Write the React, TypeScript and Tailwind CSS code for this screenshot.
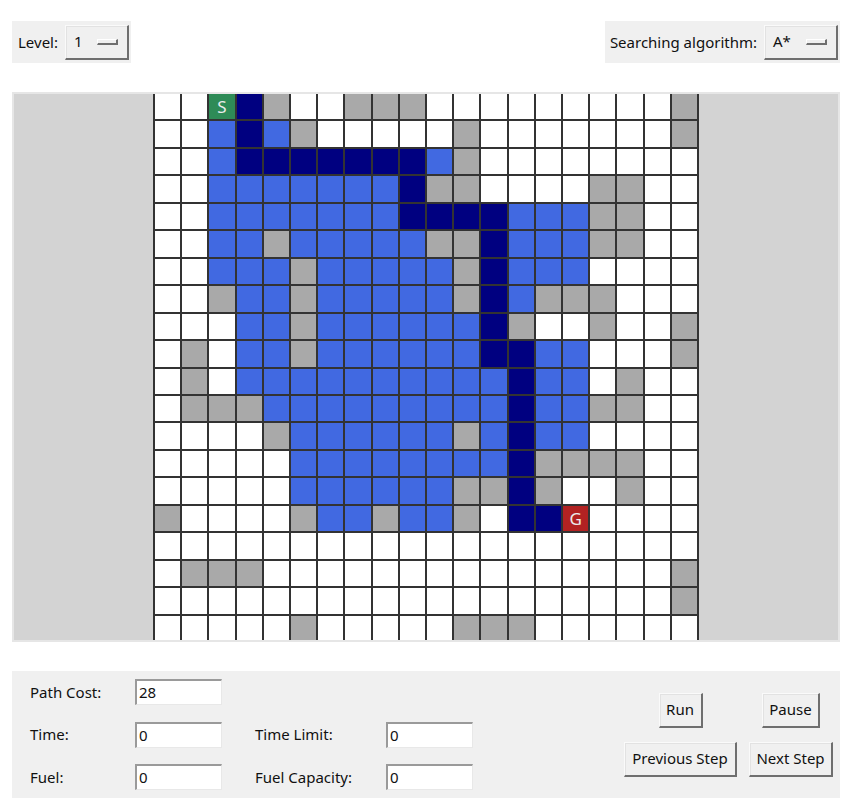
import React from "react";

// W = free, X = wall, B = visited, P = path, S = start, G = goal
const MAP = [
  "WWSPXWWXXXWWWWWWWWWX",
  "WWBPBXWWWWWXWWWWWWWX",
  "WWBPPPPPPPBXWWWWWWWW",
  "WWBBBBBBBPXXWWWWXXWW",
  "WWBBBBBBBPPPPBBBXXWW",
  "WWBBXBBBBBXXPBBBXXWW",
  "WWBBBXBBBBBXPBBBWWWW",
  "WWXBBXBBBBBXPBXXXWWW",
  "WWWBBXBBBBBBPXWWXWWX",
  "WXWBBXBBBBBBPPBBWWWX",
  "WXWBBBBBBBBBBPBBWXWW",
  "WXXXBBBBBBBBBPBBXXWW",
  "WWWWXBBBBBBXBPBBWWWW",
  "WWWWWBBBBBBBBPXXXXWW",
  "WWWWWBBBBBBXXPXWWXWW",
  "XWWWWXBBXBBXWPPGWWWW",
  "WWWWWWWWWWWWWWWWWWWW",
  "WXXXWWWWWWWWWWWWWWWX",
  "WWWWWWWWWWWWWWWWWWWX",
  "WWWWWXWWWWWXXXWWWWWW",
];

const cellClass: Record<string, string> = {
  W: "bg-white",
  X: "bg-[#a9a9a9]",
  B: "bg-[#4169e1]",
  P: "bg-[#000080]",
  S: "bg-[#2e8b57]",
  G: "bg-[#b22222]",
};

const OptionButton = ({ value, width }: { value: string; width: string }) => (
  <div
    className={`${width} h-[35px] flex items-center justify-between pl-[8px] pr-[9px] bg-[#f0f0f0] border-t border-l border-[#fafafa] border-r-2 border-b-2 border-r-[#6f6f6f] border-b-[#6f6f6f] shadow-[inset_1px_1px_0_#e2e2e2]`}
  >
    <span>{value}</span>
    <div className="w-[21px] h-[6px] border-t border-l border-white border-r-2 border-b-2 border-r-[#6f6f6f] border-b-[#6f6f6f] bg-[#f0f0f0]" />
  </div>
);

const Entry = ({ value }: { value: string }) => (
  <div className="w-[87px] h-[26px] bg-white border-t-2 border-l-2 border-t-[#9a9a9a] border-l-[#9a9a9a] border-r border-b border-[#e8e8e8] pl-[2px] flex items-center leading-none">
    {value}
  </div>
);

const Button = ({ label, width }: { label: string; width: string }) => (
  <button
    className={`${width} h-[35px] bg-[#f0f0f0] border-t border-l border-[#fafafa] border-r-2 border-b-2 border-r-[#6f6f6f] border-b-[#6f6f6f] shadow-[inset_1px_1px_0_#e2e2e2] flex items-center justify-center`}
  >
    {label}
  </button>
);

export default function App() {
  return (
    <div
      className="w-[854px] h-[812px] bg-white flex flex-col pl-[12px] pr-[14px] text-[15px] text-[#111]"
      style={{ fontFamily: '"Noto Sans", "Open Sans", sans-serif' }}
    >
      {/* Top controls */}
      <div className="flex justify-between mt-[21px] h-[42px]">
        <div className="bg-[#f0f0f0] flex items-center pl-[6px] pr-[2px] gap-[7px]">
          <span>Level:</span>
          <OptionButton value="1" width="w-[64px]" />
        </div>
        <div className="bg-[#f0f0f0] flex items-center pl-[5px] pr-[2px] gap-[7px]">
          <span>Searching algorithm:</span>
          <OptionButton value="A*" width="w-[74px]" />
        </div>
      </div>

      {/* Canvas */}
      <div className="mt-[29px] h-[550px] bg-[#d3d3d3] border-2 border-[#e6e6e6] flex justify-center overflow-hidden">
        <div className="w-[546px] h-[548px] grid grid-cols-20 grid-rows-20 gap-[2px] bg-[#333] px-[2px] pt-[1px] -mt-[1px]">
          {MAP.flatMap((row, r) =>
            row.split("").map((c, i) => (
              <div
                key={`${r}-${i}`}
                className={`${cellClass[c]} flex items-center justify-center text-[17px] text-[#ececec] leading-none`}
              >
                {c === "S" || c === "G" ? c : null}
              </div>
            ))
          )}
        </div>
      </div>

      {/* Bottom panel */}
      <div className="mt-[29px] h-[127px] bg-[#f0f0f0] flex justify-between items-center pl-[18px] pr-[7px]">
        <div className="grid grid-cols-[105px_87px_33px_131px_87px] auto-rows-[26px] gap-y-[16.5px] items-center self-start mt-[8px]">
          <span>Path Cost:</span>
          <Entry value="28" />
          <span />
          <span />
          <span />
          <span>Time:</span>
          <Entry value="0" />
          <span />
          <span>Time Limit:</span>
          <Entry value="0" />
          <span>Fuel:</span>
          <Entry value="0" />
          <span />
          <span>Fuel Capacity:</span>
          <Entry value="0" />
        </div>
        <div className="grid grid-cols-[113px_84px] gap-x-[12px] gap-y-[14px] justify-items-center">
          <Button label="Run" width="w-[44px]" />
          <Button label="Pause" width="w-[58px]" />
          <Button label="Previous Step" width="w-[113px]" />
          <Button label="Next Step" width="w-[84px]" />
        </div>
      </div>
    </div>
  );
}
